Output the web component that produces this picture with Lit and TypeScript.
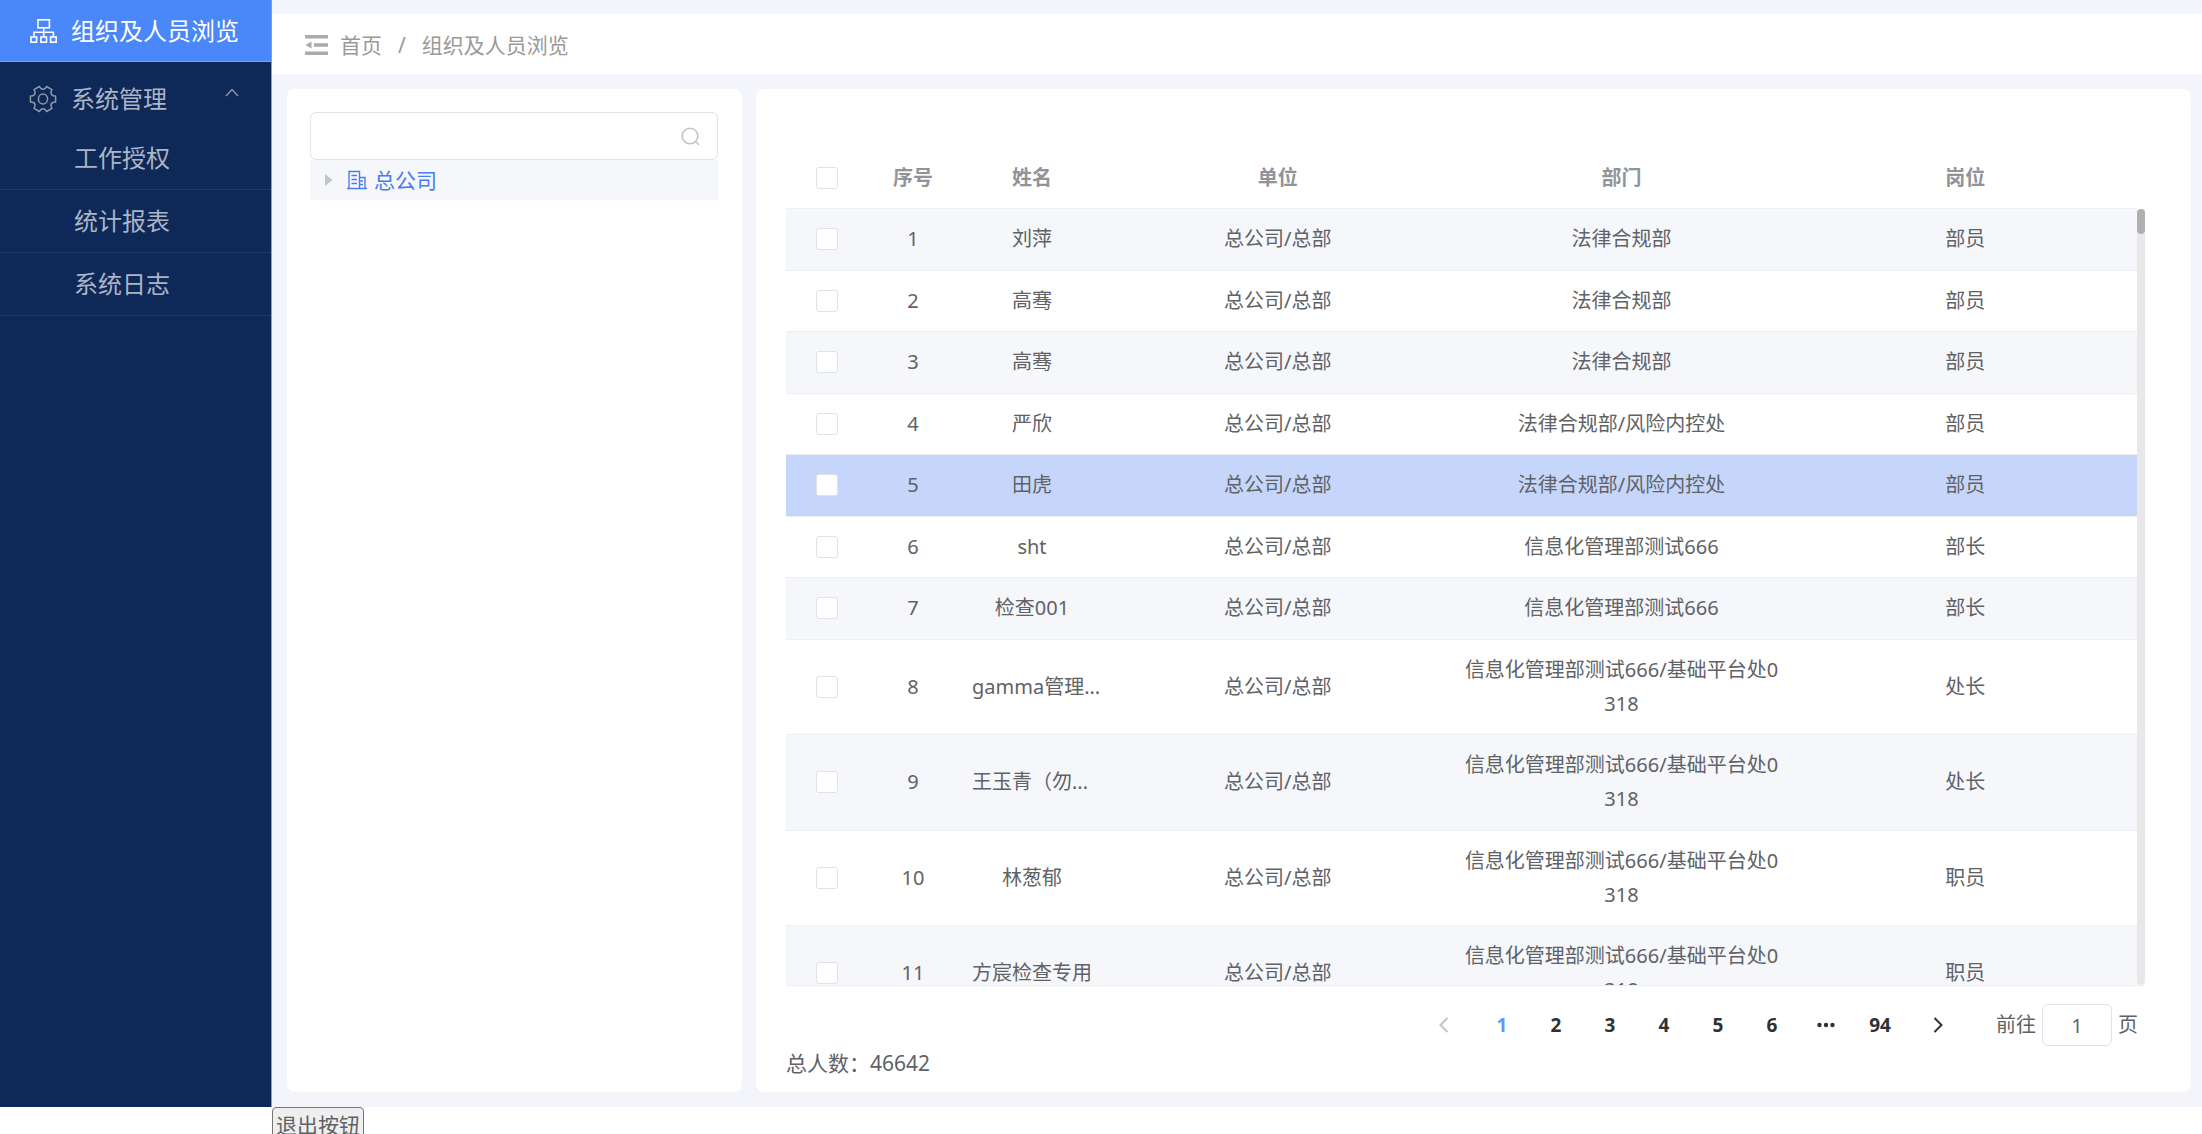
import { LitElement, html, css, svg } from "lit";
import { customElement, property, state } from "lit/decorators.js";
import { classMap } from "lit/directives/class-map.js";

interface Person {
  id: number;
  name: string;
  unit: string;
  dept: string;
  post: string;
}

const UNIT = "总公司/总部";
const LEGAL = "法律合规部";
const RISK = "法律合规部/风险内控处";
const IT = "信息化管理部测试666";
const PLATFORM = "信息化管理部测试666/基础平台处0318";

const people: Person[] = [
  { id: 1, name: "刘萍", unit: UNIT, dept: LEGAL, post: "部员" },
  { id: 2, name: "高骞", unit: UNIT, dept: LEGAL, post: "部员" },
  { id: 3, name: "高骞", unit: UNIT, dept: LEGAL, post: "部员" },
  { id: 4, name: "严欣", unit: UNIT, dept: RISK, post: "部员" },
  { id: 5, name: "田虎", unit: UNIT, dept: RISK, post: "部员" },
  { id: 6, name: "sht", unit: UNIT, dept: IT, post: "部长" },
  { id: 7, name: "检查001", unit: UNIT, dept: IT, post: "部长" },
  { id: 8, name: "gamma管理...", unit: UNIT, dept: PLATFORM, post: "处长" },
  { id: 9, name: "王玉青（勿...", unit: UNIT, dept: PLATFORM, post: "处长" },
  { id: 10, name: "林葱郁", unit: UNIT, dept: PLATFORM, post: "职员" },
  { id: 11, name: "方宸检查专用", unit: UNIT, dept: PLATFORM, post: "职员" },
];

// Six-toothed gear outline around the given centre.
function gearPath(c: number, outer: number, inner: number): string {
  const at = (deg: number, r: number) => {
    const a = (deg * Math.PI) / 180;
    return `${(c + r * Math.cos(a)).toFixed(1)} ${(c + r * Math.sin(a)).toFixed(1)}`;
  };
  let d = "";
  for (let i = 0; i < 6; i++) {
    const a = i * 60;
    d += `${i ? "L" : "M"}${at(a - 14, outer)}L${at(a + 14, outer)}`;
    d += `L${at(a + 18, inner + 1)}Q${at(a + 30, inner - 1)} ${at(a + 42, inner + 1)}`;
  }
  return d + "Z";
}

const orgIcon = html`<svg class="icon" width="27" height="26" viewBox="0 0 27 26" aria-hidden="true">
  ${svg`<g fill="none" stroke="currentColor" stroke-width="1.6">
    <rect x="8" y="1.8" width="11.4" height="8"/>
    <path d="M13.7 9.8V19M4 19V14.2H23.4V19"/>
    <rect x="1" y="19" width="5.6" height="5.2"/>
    <rect x="10.9" y="19" width="5.6" height="5.2"/>
    <rect x="20.6" y="19" width="5.6" height="5.2"/>
  </g>`}
</svg>`;

const gearIcon = html`<svg class="icon" width="28" height="28" viewBox="0 0 28 28" aria-hidden="true">
  ${svg`<g fill="none" stroke="#8f99a8" stroke-width="1.5" stroke-linejoin="round">
    <path d=${gearPath(14, 13, 9.8)}/>
    <ellipse cx="14" cy="14" rx="4.6" ry="5"/>
  </g>`}
</svg>`;

@customElement("side-menu")
export class SideMenu extends LitElement {
  @state() private open = true;

  static styles = css`
    :host {
      display: flex;
      flex-direction: column;
      box-sizing: border-box;
      background: #0e2858;
      border-right: 1px solid #8e9bb8;
      color: #abb5c6;
      font-size: 24px;
      line-height: 36px;
    }
    .top {
      display: flex;
      align-items: center;
      gap: 14px;
      height: 62px;
      padding-left: 30px;
      background: #4a87f8;
      border-bottom: 1px solid #7fa2e6;
      box-sizing: border-box;
      color: #fff;
      text-decoration: none;
    }
    .group {
      display: flex;
      align-items: center;
      gap: 14px;
      height: 65px;
      padding: 8px 32px 0 29px;
      box-sizing: border-box;
      border: 0;
      background: none;
      color: inherit;
      font: inherit;
      text-align: left;
    }
    .label {
      flex: 1;
    }
    .chevron {
      margin-bottom: 12px;
    }
    .closed {
      transform: rotate(180deg);
    }
    .sub {
      display: flex;
      align-items: center;
      height: 63px;
      padding-left: 74px;
      box-sizing: border-box;
      border-bottom: 1px solid #22396a;
      color: inherit;
      text-decoration: none;
    }
    .icon {
      flex: none;
    }
  `;

  render() {
    return html`
      <a class="top" href="#org">${orgIcon}<span>组织及人员浏览</span></a>
      <button class="group" aria-expanded=${this.open} @click=${() => (this.open = !this.open)}>
        ${gearIcon}<span class="label">系统管理</span>
        <svg class=${classMap({ chevron: true, closed: !this.open })} width="14" height="9" viewBox="0 0 14 9" aria-hidden="true">
          <path d="M1 8L7 1.5L13 8" fill="none" stroke="#8f99ab" stroke-width="1.4" />
        </svg>
      </button>
      ${this.open
        ? ["工作授权", "统计报表", "系统日志"].map((t) => html`<a class="sub" href="#sub">${t}</a>`)
        : null}
    `;
  }
}

@customElement("org-tree")
export class OrgTree extends LitElement {
  static styles = css`
    :host {
      display: block;
      box-sizing: border-box;
      padding: 23px 24px 23px 23px;
      background: #fff;
      border-radius: 8px;
    }
    .search {
      display: flex;
      align-items: center;
      height: 48px;
      padding: 0 17px;
      box-sizing: border-box;
      border: 1px solid #e1e3e8;
      border-radius: 6px;
    }
    .field {
      flex: 1;
      min-width: 0;
      border: 0;
      outline: 0;
      background: none;
      font: inherit;
      color: #606266;
    }
    .node {
      display: flex;
      align-items: center;
      width: 100%;
      height: 40px;
      padding: 0 14px;
      box-sizing: border-box;
      border: 0;
      background: #f5f7fb;
      color: #4a7cf0;
      font: inherit;
      font-size: 21px;
      line-height: 34px;
    }
    .building {
      margin: 0 7px 0 14px;
    }
  `;

  render() {
    return html`
      <div class="search">
        <input class="field" type="text" aria-label="搜索" />
        <svg width="19" height="19" viewBox="0 0 19 19" aria-hidden="true">
          <g fill="none" stroke="#c0c4cc" stroke-width="1.6">
            <circle cx="9" cy="9" r="7.8" />
            <path d="M14 14L18 18" />
          </g>
        </svg>
      </div>
      <button class="node" aria-expanded="false">
        <svg width="9" height="14" viewBox="0 0 9 14" aria-hidden="true">
          <path d="M1 1L8.500 7L1 13Z" fill="#c0c4cc" />
        </svg>
        <svg class="building" width="20" height="20" viewBox="0 0 20 20" aria-hidden="true">
          <g fill="none" stroke="currentColor" stroke-width="1.4">
            <path d="M0 18.500H20M2 18.500V1.500H12.500V18.500M12.500 7.500H18V18.500" />
            <path d="M4.500 5.500H10M4.500 9.500H10M4.500 13.500H10M12.500 11H16M12.500 14.500H16" />
          </g>
        </svg>
        <span>总公司</span>
      </button>
    `;
  }
}

@customElement("people-table")
export class PeopleTable extends LitElement {
  @property({ attribute: false }) rows: Person[] = [];
  @state() private current = 5;

  static styles = css`
    :host {
      display: grid;
      grid-template-columns: 1fr 8px;
      flex: 1;
      min-height: 0;
      border-bottom: 1px solid #ebeef5;
    }
    .scroller {
      overflow: hidden;
    }
    .grid {
      width: 100%;
      table-layout: fixed;
      border-collapse: separate;
      border-spacing: 0;
      font-size: 20px;
      line-height: 34px;
      text-align: center;
      color: #606266;
    }
    .head,
    .cell {
      box-sizing: border-box;
      padding: 13px 14px;
      border-bottom: 1px solid #ebeef5;
      word-break: break-all;
    }
    .head {
      padding-top: 14px;
      color: #909399;
      font-weight: 700;
    }
    .w-check {
      width: 82px;
    }
    .w-index {
      width: 90px;
    }
    .w-name {
      width: 148px;
    }
    .row:nth-child(odd) .cell {
      padding-bottom: 14px;
      background: #f5f7fb;
    }
    .row.current .cell {
      background: #c6d6fa;
    }
    .name {
      white-space: nowrap;
    }
    .clipped {
      text-align: left;
    }
    .check {
      appearance: none;
      display: block;
      box-sizing: border-box;
      width: 22px;
      height: 22px;
      margin: 0 auto;
      border: 1px solid #dfe2e8;
      border-radius: 3px;
      background: #fff;
    }
    .check:checked {
      background: #4a87f8;
    }
    .track {
      margin-top: 62px;
      border-radius: 4px;
      background: #e8e8e8;
    }
    .thumb {
      height: 25px;
      border-radius: 4px;
      background: #b0b0b0;
    }
  `;

  render() {
    return html`
      <div class="scroller">
        <table class="grid">
          <thead>
            <tr>
              <th class="head w-check"><input class="check" type="checkbox" aria-label="全选" /></th>
              <th class="head w-index">序号</th>
              <th class="head w-name">姓名</th>
              <th class="head">单位</th>
              <th class="head">部门</th>
              <th class="head">岗位</th>
            </tr>
          </thead>
          <tbody>
            ${this.rows.map(
              (p) => html`
                <tr class=${classMap({ row: true, current: p.id === this.current })} @click=${() => (this.current = p.id)}>
                  <td class="cell"><input class="check" type="checkbox" aria-label=${`选择 ${p.name}`} /></td>
                  <td class="cell">${p.id}</td>
                  <td class=${classMap({ cell: true, name: true, clipped: p.name.endsWith("...") })}>${p.name}</td>
                  <td class="cell">${p.unit}</td>
                  <td class="cell">${p.dept}</td>
                  <td class="cell">${p.post}</td>
                </tr>
              `
            )}
          </tbody>
        </table>
      </div>
      <div class="track"><div class="thumb"></div></div>
    `;
  }
}

@customElement("page-bar")
export class PageBar extends LitElement {
  @state() private page = 1;

  static styles = css`
    :host {
      display: flex;
      justify-content: flex-end;
      align-items: center;
      padding: 18px 7px 0 0;
      color: #606266;
      font-size: 20px;
      line-height: 34px;
    }
    .btn {
      display: flex;
      justify-content: center;
      align-items: center;
      width: 54px;
      height: 42px;
      padding: 0;
      border: 0;
      background: none;
      color: #303133;
      font: inherit;
      font-size: 19px;
      font-weight: 700;
    }
    .prev {
      margin-right: 4px;
    }
    .next {
      margin-left: 4px;
    }
    .on {
      color: #5b9cf8;
    }
    .off {
      color: #c0c4cc;
    }
    .jump {
      display: flex;
      align-items: center;
      gap: 6px;
      margin-left: 31px;
    }
    .num {
      width: 70px;
      height: 42px;
      padding: 0;
      box-sizing: border-box;
      border: 1px solid #dfe2e8;
      border-radius: 6px;
      background: #fff;
      color: #606266;
      font: inherit;
      text-align: center;
    }
  `;

  private pageButton(n: number) {
    return html`<button class=${classMap({ btn: true, on: n === this.page })} @click=${() => (this.page = n)}>${n}</button>`;
  }

  render() {
    return html`
      <button class="btn prev off" aria-label="上一页" disabled>
        <svg width="10" height="16" viewBox="0 0 10 16" aria-hidden="true">
          <path d="M8.500 1L1.500 8L8.500 15" fill="none" stroke="currentColor" stroke-width="2" />
        </svg>
      </button>
      ${[1, 2, 3, 4, 5, 6].map((n) => this.pageButton(n))}
      <button class="btn" aria-label="向后几页">
        <svg width="18" height="6" viewBox="0 0 18 6" fill="currentColor" aria-hidden="true">
          <circle cx="2.500" cy="3" r="2.200" />
          <circle cx="9" cy="3" r="2.200" />
          <circle cx="15.500" cy="3" r="2.200" />
        </svg>
      </button>
      ${this.pageButton(94)}
      <button class="btn next" aria-label="下一页">
        <svg width="10" height="16" viewBox="0 0 10 16" aria-hidden="true">
          <path d="M1.500 1L8.500 8L1.500 15" fill="none" stroke="currentColor" stroke-width="2" />
        </svg>
      </button>
      <label class="jump">前往<input class="num" type="text" .value=${String(this.page)} />页</label>
    `;
  }
}

@customElement("app-root")
export class AppRoot extends LitElement {
  static styles = css`
    :host {
      display: block;
      height: 100vh;
      overflow: hidden;
      background: #fff;
      font-family: "Noto Sans", "Noto Sans CJK SC", sans-serif;
      color: #606266;
    }
    .shell {
      display: grid;
      grid-template-columns: 272px 1fr;
      height: calc(100vh - 27px);
    }
    .main {
      display: flex;
      flex-direction: column;
      min-width: 0;
      min-height: 0;
      padding-top: 14px;
      box-sizing: border-box;
      background: #f4f5fa;
    }
    .crumbs {
      display: flex;
      align-items: center;
      gap: 16px;
      height: 60px;
      padding: 2px 33px 0;
      box-sizing: border-box;
      background: #fff;
      color: #999;
      font-size: 21px;
      line-height: 34px;
    }
    .home {
      display: flex;
      align-items: center;
      gap: 12px;
      color: inherit;
      text-decoration: none;
    }
    .panels {
      display: grid;
      grid-template-columns: 455px 1fr;
      gap: 14px;
      flex: 1;
      min-height: 0;
      padding: 15px 11px 15px 15px;
    }
    .people {
      display: flex;
      flex-direction: column;
      min-width: 0;
      min-height: 0;
      padding: 58px 46px 12px 30px;
      background: #fff;
      border-radius: 8px;
    }
    .total {
      font-size: 21px;
      line-height: 34px;
    }
    .exit {
      display: block;
      margin-left: 272px;
      padding: 0 3px;
      border: 1px solid #767676;
      border-radius: 4px;
      background: #efefef;
      color: #606266;
      font: inherit;
      font-size: 21px;
      line-height: 34px;
    }
  `;

  render() {
    return html`
      <div class="shell">
        <side-menu></side-menu>
        <main class="main">
          <nav class="crumbs">
            <a class="home" href="#home">
              <svg width="23" height="20" viewBox="0 0 23 20" fill="#ababab" aria-hidden="true">
                <path d="M0 0H23V3.600H0ZM9 8.200H23V11.800H9ZM0 16.400H23V20H0ZM0.500 10L6.500 6.500V13.500Z" />
              </svg>
              首页
            </a>
            <span>/</span>
            <span>组织及人员浏览</span>
          </nav>
          <div class="panels">
            <org-tree></org-tree>
            <section class="people">
              <people-table .rows=${people}></people-table>
              <page-bar></page-bar>
              <div class="total">总人数：46642</div>
            </section>
          </div>
        </main>
      </div>
      <button class="exit">退出按钮</button>
    `;
  }
}
